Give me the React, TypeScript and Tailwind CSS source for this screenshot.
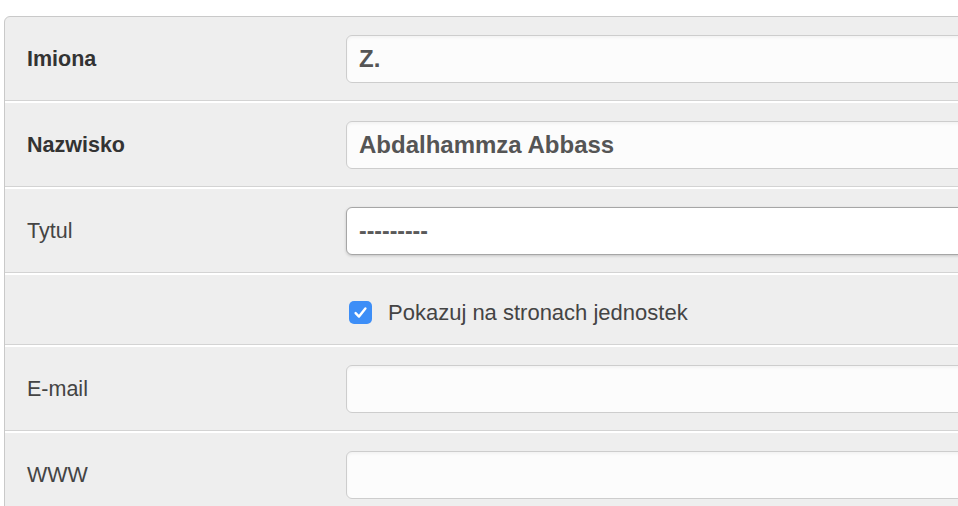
type Field = {
  label: string;
  value?: string;
  bold?: boolean;
  kind: "text" | "select" | "check";
};

const fields: Field[] = [
  { label: "Imiona", value: "Z.", bold: true, kind: "text" },
  { label: "Nazwisko", value: "Abdalhammza Abbass", bold: true, kind: "text" },
  { label: "Tytul", value: "---------", kind: "select" },
  { label: "", value: "Pokazuj na stronach jednostek", kind: "check" },
  { label: "E-mail", value: "", kind: "text" },
  { label: "WWW", value: "", kind: "text" },
];

function CheckBox() {
  return (
    <span className="flex h-[23px] w-[23px] shrink-0 items-center justify-center rounded-[5px] bg-[#3d8ef7]">
      <svg width="17" height="17" viewBox="0 0 16 16" fill="none" aria-hidden>
        <path
          d="M3.4 8.6 L6.6 11.8 L12.6 4.2"
          stroke="#fff"
          strokeWidth="2.3"
          strokeLinecap="round"
          strokeLinejoin="round"
        />
      </svg>
    </span>
  );
}

function Row({ field, first }: { field: Field; first: boolean }) {
  const top = first ? "" : "border-t-2 border-t-white";

  if (field.kind === "check") {
    return (
      <div className={`flex h-[72px] items-center border-b border-b-[#d3d3d3] ${top}`}>
        <div className="w-[344px] shrink-0" />
        <label className="flex items-center gap-[16px] pt-[5px] text-[22px] text-[#444]">
          <CheckBox />
          {field.value}
        </label>
      </div>
    );
  }

  return (
    <div
      className={`flex items-center border-b border-b-[#d3d3d3] pt-[18px] pb-[17px] ${top}`}
    >
      <div
        className={`w-[341px] shrink-0 pl-[22px] text-[21.5px] ${
          field.bold ? "font-bold text-[#333]" : "text-[#444]"
        }`}
      >
        {field.label}
      </div>
      {field.kind === "select" ? (
        <div className="flex h-[48px] w-[700px] items-center rounded-[6px] border border-[#a6a6a6] bg-white pl-[12px] text-[23px] font-bold text-[#5a5a5a] shadow-[0_1px_3px_rgba(0,0,0,0.18)]">
          {field.value}
        </div>
      ) : (
        <div className="flex h-[48px] w-[700px] items-center rounded-[6px] border border-[#cdcdcd] bg-[#fcfcfc] pl-[12px] text-[24px] font-bold text-[#555] shadow-[inset_0_2px_3px_rgba(0,0,0,0.04)]">
          {field.value}
        </div>
      )}
    </div>
  );
}

export default function App() {
  return (
    <div className="h-[506px] w-[958px] overflow-hidden bg-white pt-[16px] pl-[4px] font-['Liberation_Sans',Arial,sans-serif]">
      <div className="w-[1100px] overflow-hidden rounded-tl-[6px] border border-[#c9c9c9] bg-[#eeeeee]">
        {fields.map((f, i) => (
          <Row key={i} field={f} first={i === 0} />
        ))}
      </div>
    </div>
  );
}
